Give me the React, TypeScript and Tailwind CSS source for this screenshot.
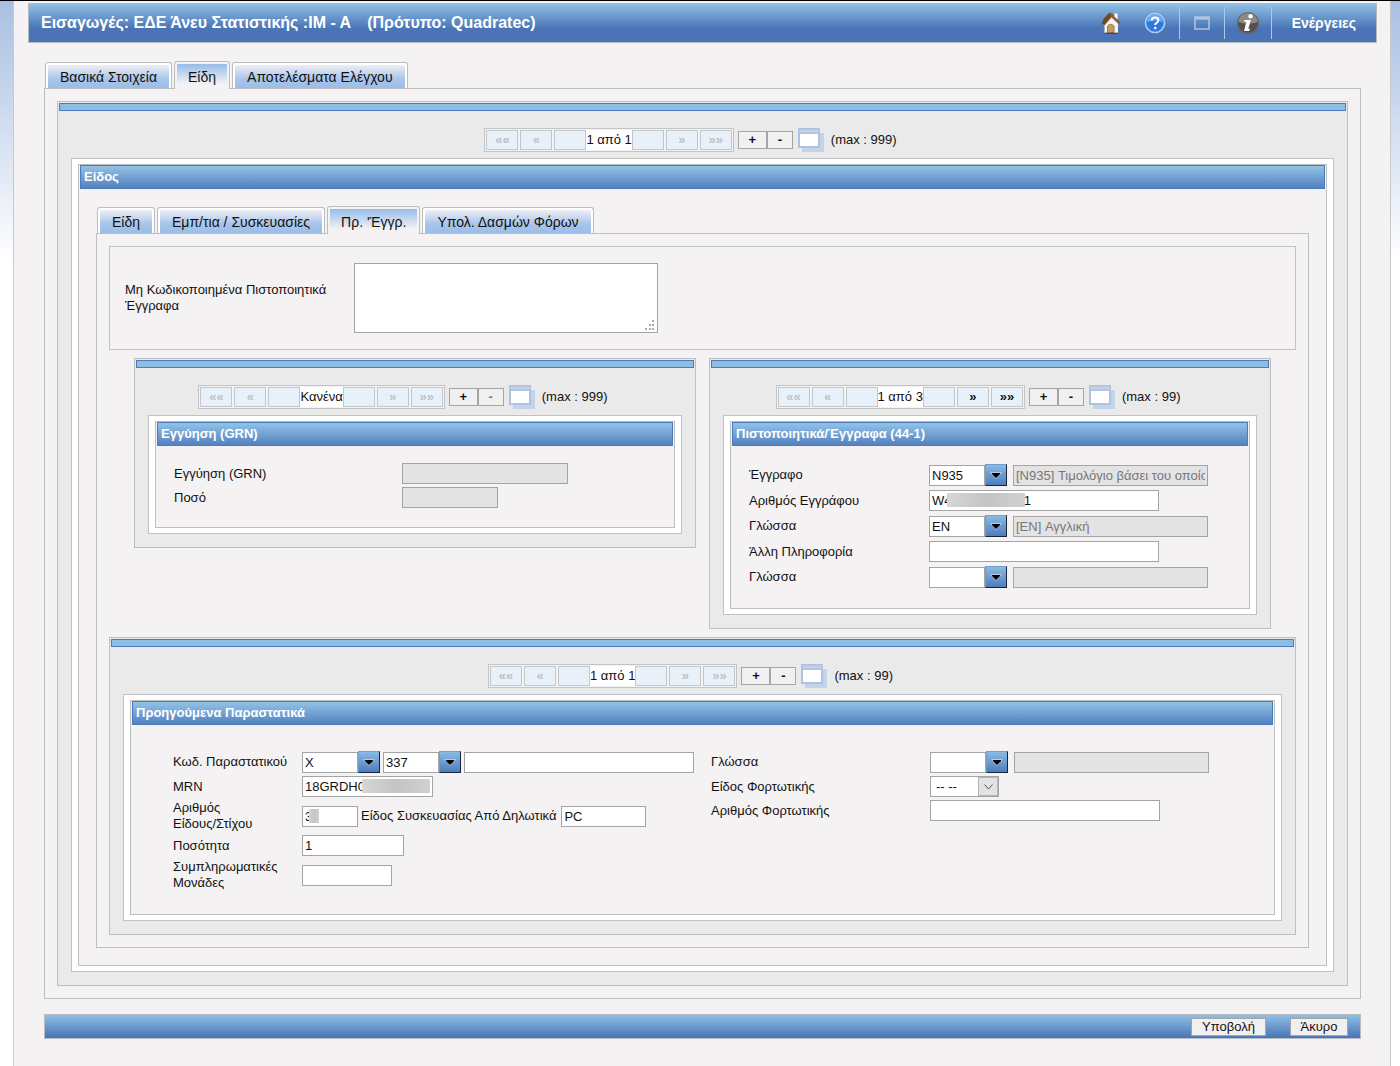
import { useState } from "react";
import type { ReactNode } from "react";

const FONT = "font-['Liberation_Sans',Arial,sans-serif]";

const BLUE_BAR = "border border-[#4c7bbb] bg-linear-to-b from-[#92c3e6] to-[#5581c0]";

function Tabs({ items, initial }: { items: string[]; initial: string }) {
  const [active, setActive] = useState(initial);
  return (
    <div role="tablist" className="ml-px flex items-end gap-[2px] text-sm">
      {items.map((t) => (
        <button
          key={t}
          type="button"
          role="tab"
          aria-selected={t === active}
          onClick={() => setActive(t)}
          className={
            t === active
              ? "relative -mb-px h-[28px] rounded-t-[3px] border border-b-0 border-[#bdbdbd] bg-[#f4f2f2] px-[2px] pt-[2px]"
              : "h-[26px] rounded-t-[3px] border border-b-0 border-[#bdbdbd] bg-white px-[2px] pt-[2px]"
          }
        >
          <span
            className={
              t === active
                ? "flex h-full items-center bg-linear-to-b from-[#97bce9] to-[#f4f2f2] to-80% px-[11px]"
                : "flex h-full items-center bg-linear-to-b from-[#eeeff4] via-[#a9c5ea] via-60% to-[#9abde9] px-3"
            }
          >
            {t}
          </span>
        </button>
      ))}
    </div>
  );
}

function PagerButton({ label, name, enabled }: { label: string; name: string; enabled?: boolean }) {
  return (
    <button
      type="button"
      aria-label={name}
      disabled={!enabled}
      className="h-5 w-8 border border-[#c3c6ca] bg-[#e8f0fa] text-[13px] leading-4 font-bold text-[#111] disabled:text-[#bcc0c6]"
    >
      {label}
    </button>
  );
}

function WindowsIcon() {
  return (
    <svg width="28" height="26" viewBox="0 0 28 26">
      <rect x="5" y="6" width="22" height="19" fill="#c3d3e8" />
      <rect x="1" y="1" width="22" height="20" fill="#b0c1e1" />
      <rect x="2.500" y="2.500" width="19" height="3" fill="#c3d0e8" />
      <rect x="3" y="7" width="18" height="12" fill="#fff" />
    </svg>
  );
}

type PagerProps = { position: string; max: number; next?: boolean; minusOff?: boolean };

function Pager({ position, max, next, minusOff }: PagerProps) {
  return (
    <div className="flex h-6 items-center justify-center pr-6">
      <div className="flex items-center border border-[#c4c4c4] bg-[#f4f4f4] p-px">
        <div className="flex gap-[2px]">
          <PagerButton label="««" name="Πρώτο" />
          <PagerButton label="«" name="Προηγούμενο" />
          <PagerButton label="" name="Πίσω" />
        </div>
        <span className="h-5 bg-white leading-5">{position}</span>
        <div className="flex gap-[2px]">
          <PagerButton label="" name="Εμπρός" />
          <PagerButton label="»" name="Επόμενο" enabled={next} />
          <PagerButton label="»»" name="Τελευταίο" enabled={next} />
        </div>
      </div>
      <button type="button" className="ml-1 h-[18px] w-[29px] border border-[#a5a5a5] bg-[#f1f0f0] leading-[14px] font-bold">
        +
      </button>
      <button
        type="button"
        disabled={minusOff}
        className="h-[18px] w-[26px] border border-[#a5a5a5] bg-[#f1f0f0] leading-[14px] font-bold disabled:text-[#777]"
      >
        -
      </button>
      <button type="button" aria-label="Παράθυρο" className="ml-1">
        <WindowsIcon />
      </button>
      <span className="ml-[6px]">(max : {max})</span>
    </div>
  );
}

function Block({ title, pager, children }: { title: string; pager: PagerProps; children: ReactNode }) {
  return (
    <section className="border border-[#bebebe] bg-[#eaeaea] p-px pb-[13px]">
      <div className="h-2 border border-[#4c7bbb] bg-[#8cbde3]" />
      <div className="pt-[17px] pb-[6px]">
        <Pager {...pager} />
      </div>
      <div className="mx-3 border border-[#c2c2c2] bg-white px-[6px] py-[5px]">
        <div className="border border-[#bfbfbf] bg-[#f4f2f2]">
          <h2 className={`${BLUE_BAR} m-px mt-0 h-6 px-[3px] text-[13px] leading-[22px] font-bold text-white`}>
            {title}
          </h2>
          {children}
        </div>
      </div>
    </section>
  );
}

type InputProps = { id?: string; name?: string; value?: string; width: string; disabled?: boolean };

function TextInput({ id, name, value = "", width, disabled }: InputProps) {
  return (
    <input
      id={id}
      aria-label={name}
      type="text"
      defaultValue={value}
      disabled={disabled}
      className={`${width} h-[21px] border border-[#a3a5a5] bg-white px-[2px] disabled:bg-[#e3e3e3] disabled:text-[#777]`}
    />
  );
}

function Combo({ id, name, value = "" }: { id?: string; name?: string; value?: string }) {
  return (
    <span className="flex items-center">
      <TextInput id={id} name={name} value={value} width="w-14" />
      <button
        type="button"
        aria-label="Επιλογή"
        className="flex h-[22px] w-[22px] items-center justify-center border border-t-[#6f9fd0] border-r-[#1b2438] border-b-[#1b2438] border-l-[#6f9fd0] bg-linear-to-b from-[#8abbe2] to-[#4f7cbe]"
      >
        <svg width="12" height="7" viewBox="0 0 12 7">
          <path d="M0 0H12L6 7Z" fill="#b9cbe2" />
          <path d="M2 1H10V2L6 6 2 2Z" fill="#000" />
        </svg>
      </button>
    </span>
  );
}

// covers the hidden part of a value
function Masked({ children, cover }: { children: ReactNode; cover: string }) {
  return (
    <span className="relative flex">
      {children}
      <span className={`${cover} pointer-events-none absolute top-[3px] h-[14px] bg-linear-to-r from-[#d6d6d6] via-[#c4c4c4] to-[#d0d0d0]`} />
    </span>
  );
}

function Row({ id, label, labelWidth, children }: { id: string; label: string; labelWidth: string; children: ReactNode }) {
  return (
    <div className="flex items-center">
      <label htmlFor={id} className={`${labelWidth} shrink-0 leading-4`}>
        {label}
      </label>
      {children}
    </div>
  );
}

function HomeIcon() {
  return (
    <svg width="20" height="22" viewBox="0 0 20 22">
      <path d="M3.500 11 10 4.500 17 11v10H3.500z" fill="#f7f4ef" />
      <path d="M1 12 2.500 7 8.500 0.800 11 1l8.500 9.500-1.500 2-7.500-7-6.500 7.500z" fill="#8a5f3c" />
      <path d="M1 12 2.500 7 8.500 0.800 10 4.500 3.500 12.500z" fill="#6f482b" />
      <path d="M13.500 1.500h3v6l-3-3z" fill="#fff" />
      <path d="M6.500 21v-7q3-3.500 6.500 0v7z" fill="#c79c62" stroke="#8d6a3c" strokeWidth="0.800" />
      <path d="M3.500 21.300h13.500" stroke="#5d3d26" strokeWidth="1.200" />
    </svg>
  );
}

function HelpIcon() {
  return (
    <svg width="22" height="22" viewBox="0 0 22 22">
      <circle cx="11" cy="11" r="9.500" fill="#2f78de" stroke="#a9d2fa" strokeWidth="1.600" />
      <path d="M3 10a8 8 0 0 1 16 0q-8-3-16 0z" fill="#6fa9ef" />
      <path d="M7.800 8.600q0-3.200 3.300-3.200t3.300 2.800q0 1.700-1.800 2.700-1.400.8-1.400 2.200" fill="none" stroke="#fff" strokeWidth="2" />
      <circle cx="11.200" cy="16" r="1.300" fill="#fff" />
    </svg>
  );
}

function FrameIcon() {
  return (
    <svg width="16" height="14" viewBox="0 0 16 14">
      <rect x="1" y="1" width="14" height="12" fill="none" stroke="#a9c0de" strokeWidth="1.600" />
      <path d="M1 2.500h14" stroke="#b9cce4" strokeWidth="2" />
    </svg>
  );
}

function InfoIcon() {
  return (
    <svg width="24" height="24" viewBox="0 0 24 24">
      <circle cx="12" cy="12" r="10.800" fill="#54504e" />
      <path d="M2 11a10 10 0 0 1 20 0q-10 3-20 0z" fill="#8b8886" />
      <circle cx="12" cy="12" r="10.300" fill="none" stroke="#6f6b69" />
      <circle cx="14.500" cy="5.300" r="2.200" fill="#fff" />
      <path d="M8.500 9h6.300L12.300 17.800h1.900L13 20H8l2.400-9.200H8z" fill="#fff" />
    </svg>
  );
}

function Header() {
  return (
    <header className="flex h-10 items-center border border-[#b5b9c2] bg-linear-to-b from-[#8fc0e4] to-[#4a74b6] to-65% pl-3 text-base font-bold text-white">
      <h1 className="flex gap-4">
        <span>Εισαγωγές: ΕΔΕ Άνευ Στατιστικής :IM - A</span>
        <span>(Πρότυπο: Quadratec)</span>
      </h1>
      <div className="ml-auto flex items-center">
        <button type="button" aria-label="Αρχική" className="mr-[23px]">
          <HomeIcon />
        </button>
        <button type="button" aria-label="Βοήθεια" className="mr-[13px]">
          <HelpIcon />
        </button>
        <span className="flex h-8 items-center border-x border-[#a9c8ea] px-[14px]">
          <button type="button" aria-label="Παράθυρο">
            <FrameIcon />
          </button>
        </span>
        <span className="flex h-8 items-center border-r border-[#a9c8ea] px-[11px]">
          <button type="button" aria-label="Πληροφορίες">
            <InfoIcon />
          </button>
        </span>
        <button type="button" className="px-5 text-sm font-bold">
          Ενέργειες
        </button>
      </div>
    </header>
  );
}

function GuaranteeBlock() {
  return (
    <Block title="Εγγύηση (GRN)" pager={{ position: "Κανένα", max: 999, minusOff: true }}>
      <div className="flex flex-col gap-[3px] pt-4 pb-[19px] pl-[18px]">
        <Row id="grn" label="Εγγύηση (GRN)" labelWidth="w-[228px]">
          <TextInput id="grn" width="w-[166px]" disabled />
        </Row>
        <Row id="amount" label="Ποσό" labelWidth="w-[228px]">
          <TextInput id="amount" width="w-24" disabled />
        </Row>
      </div>
    </Block>
  );
}

function CertificatesBlock() {
  return (
    <Block title="Πιστοποιητικά/Έγγραφα (44-1)" pager={{ position: "1 από 3", max: 99, next: true }}>
      <div className="flex flex-col gap-1 pt-[17px] pb-5 pl-[18px]">
        <Row id="doc" label="Έγγραφο" labelWidth="w-[180px]">
          <div className="flex items-center gap-[6px]">
            <Combo id="doc" value="N935" />
            <TextInput name="Περιγραφή εγγράφου" value="[N935] Τιμολόγιο βάσει του οποίου" width="w-[195px]" disabled />
          </div>
        </Row>
        <Row id="doc-no" label="Αριθμός Εγγράφου" labelWidth="w-[180px]">
          <Masked cover="left-[18px] w-[78px]">
            <TextInput id="doc-no" value={"W4" + "\u00a0".repeat(20) + "1"} width="w-[230px]" />
          </Masked>
        </Row>
        <Row id="doc-lang" label="Γλώσσα" labelWidth="w-[180px]">
          <div className="flex items-center gap-[6px]">
            <Combo id="doc-lang" value="EN" />
            <TextInput name="Περιγραφή γλώσσας" value="[EN] Αγγλική" width="w-[195px]" disabled />
          </div>
        </Row>
        <Row id="doc-info" label="Άλλη Πληροφορία" labelWidth="w-[180px]">
          <TextInput id="doc-info" width="w-[230px]" />
        </Row>
        <Row id="info-lang" label="Γλώσσα" labelWidth="w-[180px]">
          <div className="flex items-center gap-[6px]">
            <Combo id="info-lang" />
            <TextInput name="Περιγραφή γλώσσας πληροφορίας" width="w-[195px]" disabled />
          </div>
        </Row>
      </div>
    </Block>
  );
}

function PreviousDocsBlock() {
  return (
    <Block title="Προηγούμενα Παραστατικά" pager={{ position: "1 από 1", max: 99 }}>
      <div className="flex pt-[25px] pb-[23px] pl-[42px]">
        <div className="flex w-[538px] shrink-0 flex-col gap-[3px]">
          <Row id="prev-code" label="Κωδ. Παραστατικού" labelWidth="w-[129px]">
            <div className="flex items-center gap-[3px]">
              <Combo id="prev-code" value="X" />
              <Combo name="Τύπος" value="337" />
              <TextInput name="Αριθμός παραστατικού" width="w-[230px]" />
            </div>
          </Row>
          <Row id="mrn" label="MRN" labelWidth="w-[129px]">
            <Masked cover="left-[60px] w-[68px]">
              <TextInput id="mrn" value="18GRDH0" width="w-[131px]" />
            </Masked>
          </Row>
          <Row id="item-no" label="Αριθμός Είδους/Στίχου" labelWidth="w-[129px] pr-10">
            <div className="flex items-center gap-[3px]">
              <Masked cover="left-[7px] w-[10px]">
                <TextInput id="item-no" value="3" width="w-14" />
              </Masked>
              <label htmlFor="pack-type" className="pr-[2px]">Είδος Συσκευασίας Από Δηλωτικά</label>
              <TextInput id="pack-type" value="PC" width="w-[85px]" />
            </div>
          </Row>
          <Row id="quantity" label="Ποσότητα" labelWidth="w-[129px]">
            <TextInput id="quantity" value="1" width="w-[102px]" />
          </Row>
          <Row id="extra-units" label="Συμπληρωματικές Μονάδες" labelWidth="w-[129px]">
            <TextInput id="extra-units" width="w-[90px]" />
          </Row>
        </div>
        <div className="flex flex-col gap-[3px]">
          <Row id="prev-lang" label="Γλώσσα" labelWidth="w-[219px]">
            <div className="flex items-center gap-[6px]">
              <Combo id="prev-lang" />
              <TextInput name="Περιγραφή γλώσσας παραστατικού" width="w-[195px]" disabled />
            </div>
          </Row>
          <Row id="bill-type" label="Είδος Φορτωτικής" labelWidth="w-[219px]">
            <span className="relative flex">
              <select id="bill-type" className="h-[21px] w-[69px] appearance-none border border-[#a3a5a5] bg-white pl-[5px] leading-4">
                <option>-- --</option>
              </select>
              <span className="pointer-events-none absolute inset-y-px right-px flex w-5 items-center justify-center border border-[#b5b5b5] bg-[#e3e3e3]">
                <svg width="9" height="6" viewBox="0 0 9 6" fill="none" stroke="#555">
                  <path d="M0.500 0.500 4.500 5 8.500 0.500" />
                </svg>
              </span>
            </span>
          </Row>
          <Row id="bill-no" label="Αριθμός Φορτωτικής" labelWidth="w-[219px]">
            <TextInput id="bill-no" width="w-[230px]" />
          </Row>
        </div>
      </div>
    </Block>
  );
}

export default function App() {
  return (
    <div className={`${FONT} min-h-screen border-t border-black bg-linear-to-b from-[#a9bfe2] to-white to-[260px] px-[9px] pl-[13px] text-[13px] leading-4 text-[#111]`}>
      <div className="min-h-screen border-x border-[#c9c9c9] bg-[#f4f2f2] px-[13px] pt-[2px] pl-[14px]">
        <Header />
        <main className="mx-4 mt-[18px]">
          <Tabs items={["Βασικά Στοιχεία", "Είδη", "Αποτελέσματα Ελέγχου"]} initial="Είδη" />
          <div className="border border-[#bfbfbf] p-3">
            <Block title="Είδος" pager={{ position: "1 από 1", max: 999 }}>
              <div className="px-[17px] pt-4 pb-[17px]">
                <Tabs items={["Είδη", "Εμπ/τια / Συσκευασίες", "Πρ. 'Έγγρ.", "Υπολ. Δασμών Φόρων"]} initial="Πρ. 'Έγγρ." />
                <div className="flex flex-col gap-2 border border-[#bfbfbf] p-3">
                  <div className="flex items-center border border-[#c2c2c2] px-[15px] py-4">
                    <label htmlFor="uncoded" className="w-[229px] pr-5">
                      Μη Κωδικοποιημένα Πιστοποιητικά Έγγραφα
                    </label>
                    <div className="relative flex">
                      <textarea id="uncoded" className="h-[70px] w-[304px] resize-none border border-[#a3a5a5] bg-white" />
                      <svg width="10" height="10" viewBox="0 0 10 10" fill="#aaa" className="pointer-events-none absolute right-[3px] bottom-[3px]">
                        <path d="M7 0h2v2H7zM4 4h2v2H4zM7 4h2v2H7zM0 8h2v2H0zM4 8h2v2H4zM7 8h2v2H7z" />
                      </svg>
                    </div>
                  </div>
                  <div className="grid grid-cols-2 items-start gap-[13px] px-[25px]">
                    <GuaranteeBlock />
                    <CertificatesBlock />
                  </div>
                  <PreviousDocsBlock />
                </div>
              </div>
            </Block>
          </div>
          <footer className="mt-[15px] flex h-[25px] items-center justify-end gap-6 border border-[#b8bcc4] bg-linear-to-b from-[#8fc0e4] to-[#4a74b6] pr-3">
            <button type="button" className="h-[18px] w-[75px] border border-[#a5a5a5] bg-[#f1f0f0] leading-4">
              Υποβολή
            </button>
            <button type="button" className="h-[18px] w-[58px] border border-[#a5a5a5] bg-[#f1f0f0] leading-4">
              Άκυρο
            </button>
          </footer>
        </main>
      </div>
    </div>
  );
}
